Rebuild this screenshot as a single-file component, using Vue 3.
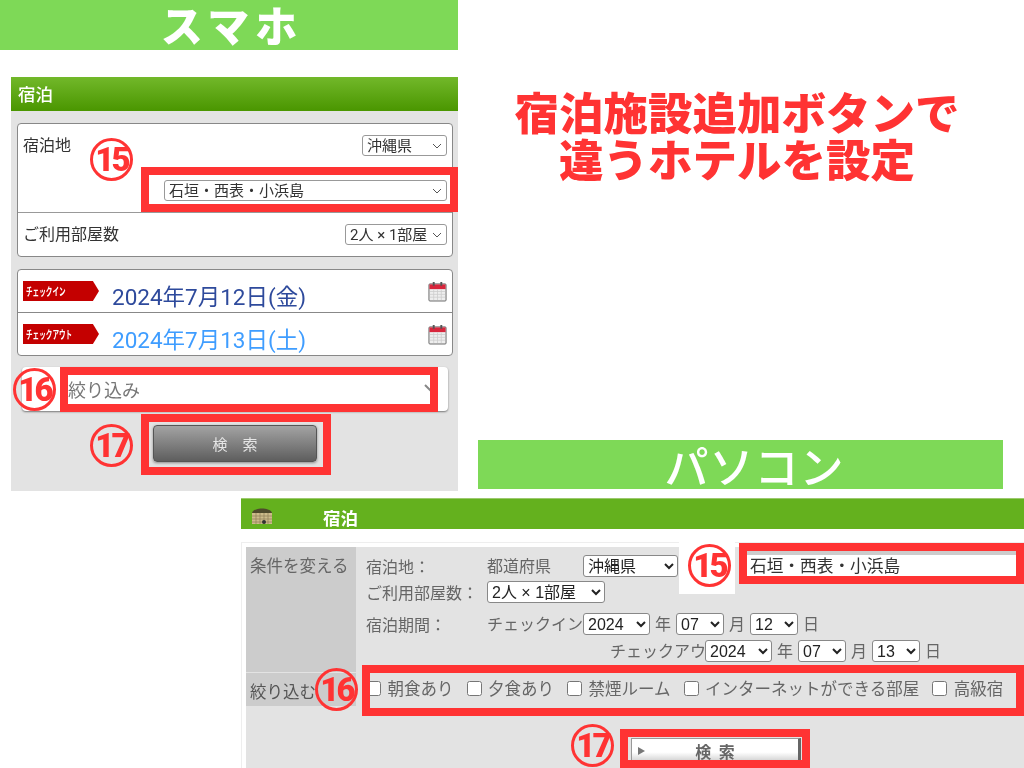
<script setup>
const chk = ['朝食あり', '夕食あり', '禁煙ルーム', 'インターネットができる部屋', '高級宿']
const badges = [
  { n: 15, x: 90, y: 138 },
  { n: 16, x: 13, y: 368 },
  { n: 17, x: 90, y: 424 },
  { n: 15, x: 688, y: 544 },
  { n: 16, x: 315, y: 668 },
  { n: 17, x: 571, y: 724 }
]
const boxes = [
  { x: 141, y: 167, w: 317, h: 45 },
  { x: 60, y: 367, w: 378, h: 45 },
  { x: 141, y: 414, w: 190, h: 61 },
  { x: 362, y: 665, w: 662, h: 51 },
  { x: 620, y: 729, w: 190, h: 39 }
]
</script>

<template>
  <div class="canvas">
    <div class="band band-sp"><span>スマホ</span></div>
    <div class="band band-pc"><span>パソコン</span></div>
    <div class="title"><div>宿泊施設追加ボタンで</div><div>違うホテルを設定</div></div>

    <section class="sp">
      <header class="sp-head">宿泊</header>
      <div class="sp-body">
        <div class="card">
          <div class="place">
            <span class="sp-label">宿泊地</span>
            <div class="place-sels">
              <select class="sp-sel w85"><option>沖縄県</option></select>
              <select class="sp-sel w283"><option>石垣・西表・小浜島</option></select>
            </div>
          </div>
          <div class="rooms">
            <span class="sp-label">ご利用部屋数</span>
            <select class="sp-sel w102"><option>2人 × 1部屋</option></select>
          </div>
        </div>
        <div class="card dates">
          <div class="date-row">
            <span class="tag"><b>チェックイン</b></span>
            <span class="date navy">2024年7月12日(金)</span>
            <svg class="cal" viewBox="0 0 20 22">
              <rect x="1" y="3" width="18" height="18" rx="1" fill="#eee" stroke="#666" />
              <rect x="1.500" y="3.500" width="17" height="5" fill="#d8263c" />
              <rect x="5" y="1" width="2" height="4" fill="#555" />
              <rect x="13" y="1" width="2" height="4" fill="#555" />
              <path d="M2 11h16M2 14h16M2 17h16M6 9v11M10 9v11M14 9v11" stroke="#ccc" stroke-width=".8" />
            </svg>
          </div>
          <div class="date-row second">
            <span class="tag"><b>チェックアウト</b></span>
            <span class="date sky">2024年7月13日(土)</span>
            <svg class="cal" viewBox="0 0 20 22">
              <rect x="1" y="3" width="18" height="18" rx="1" fill="#eee" stroke="#666" />
              <rect x="1.500" y="3.500" width="17" height="5" fill="#d8263c" />
              <rect x="5" y="1" width="2" height="4" fill="#555" />
              <rect x="13" y="1" width="2" height="4" fill="#555" />
              <path d="M2 11h16M2 14h16M2 17h16M6 9v11M10 9v11M14 9v11" stroke="#ccc" stroke-width=".8" />
            </svg>
          </div>
        </div>
        <div class="filter">
          <span>絞り込み</span>
          <svg class="filter-arrow" viewBox="0 0 14 8"><path d="M1 1l6 6 6-6" fill="none" stroke="#888" stroke-width="2" /></svg>
        </div>
        <button class="sp-btn" type="button">検　索</button>
      </div>
    </section>

    <section class="pc">
      <header class="pc-head">
        <svg class="hotel" viewBox="0 0 22 20">
          <path d="M1 8C2 2 20 2 21 8z" fill="#4f4a2c" />
          <rect x="1" y="8" width="20" height="11" fill="#cdbb8a" />
          <path d="M1 11h20M1 14h20M1 17h20M5 8v11M9 8v11M13 8v11M17 8v11" stroke="#8f7f58" stroke-width=".7" />
          <circle cx="13" cy="17" r="2" fill="#333" />
        </svg>
        <span>宿泊</span>
      </header>
      <div class="pc-body">
        <div class="side side-top">条件を変える</div>
        <div class="main">
          <div class="row r1">
            <span class="lab">宿泊地：</span>
            <span class="sub">都道府県</span>
            <select class="pc-sel w95"><option>沖縄県</option></select>
          </div>
          <div class="row r2">
            <span class="lab">ご利用部屋数：</span>
            <select class="pc-sel w118"><option>2人 × 1部屋</option></select>
          </div>
          <div class="row r3">
            <span class="lab">宿泊期間：</span>
            <span class="sub clip">チェックイン</span>
            <select class="pc-sel w67"><option>2024</option></select>
            <span class="unit">年</span>
            <select class="pc-sel w48"><option>07</option></select>
            <span class="unit">月</span>
            <select class="pc-sel w48"><option>12</option></select>
            <span class="unit">日</span>
          </div>
          <div class="row r4">
            <span class="sub clip">チェックアウ</span>
            <select class="pc-sel w67"><option>2024</option></select>
            <span class="unit">年</span>
            <select class="pc-sel w48"><option>07</option></select>
            <span class="unit">月</span>
            <select class="pc-sel w48"><option>13</option></select>
            <span class="unit">日</span>
          </div>
        </div>
        <div class="side side-bottom">絞り込む</div>
        <div class="checks">
          <label v-for="c in chk" :key="c" class="chk"><input type="checkbox" /><span>{{ c }}</span></label>
        </div>
        <div class="pc-foot">
          <button class="pc-btn" type="button"><i class="tri"></i><span>検 索</span></button>
        </div>
      </div>
    </section>

    <div class="patch"></div>
    <div class="area-box">石垣・西表・小浜島</div>
    <div v-for="b in boxes" :key="b.x + '-' + b.y" class="box"
      :style="{ left: b.x + 'px', top: b.y + 'px', width: b.w + 'px', height: b.h + 'px' }"></div>
    <div v-for="b in badges" :key="b.x + '_' + b.y" class="badge"
      :style="{ left: b.x + 'px', top: b.y + 'px' }">{{ b.n }}</div>
  </div>
</template>

<style>
html, body { margin: 0; background: #fff; }
</style>

<style scoped>
.canvas {
  position: relative;
  width: 1024px;
  height: 768px;
  overflow: hidden;
  background: #fff;
  font-family: "Noto Sans CJK JP", sans-serif;
  color: #444;
  filter: blur(0.45px);
}
.band {
  position: absolute;
  display: flex;
  align-items: center;
  justify-content: center;
  background: #7ed957;
  color: #fff;
}
.band-sp { left: 0; top: 0; width: 458px; height: 50px; font-size: 42px; font-weight: 900; letter-spacing: 6px; line-height: 44px; padding: 0 0 2px 6px; box-sizing: border-box; }
.band-pc { left: 478px; top: 440px; width: 525px; height: 49px; font-size: 44px; font-weight: 500; letter-spacing: 1px; line-height: 46px; padding-left: 28px; box-sizing: border-box; }
.title {
  position: absolute;
  left: 480px;
  top: 87px;
  width: 514px;
  text-align: center;
  color: #ff3333;
  font-size: 44.500px;
  font-weight: 900;
  line-height: 47px;
  white-space: nowrap;
}

/* phone panel */
.sp { position: absolute; left: 11px; top: 77px; width: 447px; height: 414px; background: #e3e3e3; display: flex; flex-direction: column; }
.sp-head {
  height: 34px;
  padding: 0 0 2px 7px;
  box-sizing: border-box;
  flex: none;
  display: flex;
  align-items: center;
  background: linear-gradient(#72b82a, #4a9600);
  color: #fff;
  font-size: 17.500px;
  font-weight: 500;
}
.sp-body { flex: 1; padding: 12px 5px 0 6px; display: flex; flex-direction: column; align-items: stretch; }
.card { background: #fff; border: 1px solid #888; border-radius: 4px; box-sizing: border-box; }
.place { height: 89px; box-sizing: border-box; border-bottom: 1px solid #999; display: flex; justify-content: space-between; padding: 11px 5px 0 5px; }
.sp-label { font-size: 16px; line-height: 20px; color: #333; margin-top: -1px; }
.place-sels { display: flex; flex-direction: column; align-items: flex-end; gap: 24px; }
.rooms { height: 43px; display: flex; justify-content: space-between; align-items: center; padding: 0 5px; }
.rooms .sp-label { margin-top: -3px; }
.sp-sel {
  appearance: none;
  height: 21px;
  box-sizing: border-box;
  border: 1px solid #999;
  border-radius: 3px;
  padding: 0 16px 0 4px;
  font: 15px Roboto, "Noto Sans CJK JP", sans-serif;
  color: #333;
  background: #fff url("data:image/svg+xml,%3Csvg xmlns='http://www.w3.org/2000/svg' width='10' height='6'%3E%3Cpath d='M1 1l4 4 4-4' fill='none' stroke='%23555'/%3E%3C/svg%3E") no-repeat right 4px center;
}
.w85 { width: 85px; }
.w283 { width: 283px; }
.w102 { width: 102px; }
.dates { margin-top: 12px; height: 87px; }
.date-row { height: 42px; box-sizing: border-box; display: flex; align-items: flex-start; padding: 11px 5px 0 5px; }
.date-row.second { height: 43px; border-top: 1px solid #888; }
.tag {
  width: 76px;
  height: 20px;
  flex: none;
  background: #c40000;
  color: #fff;
  font-size: 11px;
  line-height: 20px;
  padding-left: 3px;
  box-sizing: border-box;
  white-space: nowrap;
  clip-path: polygon(0 0, 92% 0, 100% 50%, 92% 100%, 0 100%);
}
.tag b { display: inline-block; font-weight: 700; transform: scaleX(.6); transform-origin: left center; }
.date {
  margin-left: 13px;
  font: 22.500px/32px Roboto, "Noto Sans CJK JP", sans-serif;
  white-space: nowrap;
}
.navy { color: #2e4a9c; }
.sky { color: #3f9dff; }
.cal { width: 19px; height: 21px; margin-left: auto; flex: none; }
.filter {
  margin: 11px 5px 0 5px;
  height: 44px;
  background: #fff;
  border-radius: 4px;
  box-shadow: 0 1px 2px #777;
  display: flex;
  align-items: center;
  padding-left: 46px;
  font-size: 18px;
  color: #777;
  position: relative;
}
.filter-arrow { position: absolute; left: 402px; top: 17px; width: 14px; height: 8px; }
.sp-btn {
  align-self: flex-start;
  margin: 14px 0 0 136px;
  width: 164px;
  height: 37px;
  border: 1px solid #555;
  border-radius: 4px;
  background: linear-gradient(#a3a3a3, #5e5e5e);
  box-shadow: 0 1px 3px #888;
  color: #e6e6e6;
  font: 15px "Noto Sans CJK JP", sans-serif;
}

/* desktop panel */
.pc { position: absolute; left: 241px; top: 498px; width: 783px; height: 270px; display: flex; flex-direction: column; }
.pc-head {
  height: 31px;
  flex: none;
  background: #64b11e;
  border-top: 1px solid #9cc96e;
  box-sizing: border-box;
  position: relative;
  display: flex;
  align-items: flex-end;
  color: #fff;
  font-size: 17.500px;
  font-weight: 700;
  line-height: 22px;
}
.pc-head span { margin-left: 82px; }
.hotel { position: absolute; left: 10px; top: 6px; width: 22px; height: 20px; }
.pc-body {
  margin-top: 13px;
  flex: 1;
  border: 1px solid #eee;
  border-width: 1px 0 0 1px;
  padding: 4px 0 0 4px;
  background: linear-gradient(#e3e3e3, #e3e3e3) content-box;
  display: grid;
  grid-template-columns: 110px 1fr;
  grid-template-rows: 125px 34px 1fr;
}
.side { background: #ccc; padding-left: 4px; font-size: 16.500px; color: #666; line-height: 24px; white-space: nowrap; }
.side-top { padding-top: 6px; box-sizing: border-box; }
.side-bottom { border-top: 1px solid #e3e3e3; line-height: 36px; color: #555; overflow: hidden; }
.main { padding: 8px 0 0 10px; display: flex; flex-direction: column; }
.row { display: flex; align-items: center; height: 22px; font-size: 16px; color: #666; white-space: nowrap; }
.r2 { margin-top: 4px; }
.r3 { margin-top: 10px; }
.r4 { margin-top: 5px; padding-left: 244px; }
.lab { width: 121px; flex: none; }
.sub { color: #666; margin-top: -2px; }
.r1 .sub { width: 96px; }
.clip { overflow: hidden; flex: none; }
.r3 .clip { width: 96px; }
.r4 .clip { width: 95px; }
.unit { margin: -2px 5px 0 5px; }
.pc-sel {
  height: 22px;
  box-sizing: border-box;
  border: 1px solid #888;
  border-radius: 3px;
  background: #fff;
  font: 16px "Liberation Sans", "Noto Sans CJK JP", sans-serif;
  color: #222;
  padding: 0;
}
.w95 { width: 95px; }
.w118 { width: 118px; }
.w67 { width: 67px; }
.w48 { width: 48px; }
.checks { padding: 0 0 2px 10px; display: flex; align-items: center; gap: 13px; font-size: 16.500px; color: #666; white-space: nowrap; }
.chk { display: flex; align-items: center; gap: 6.500px; }
.chk input { margin: 0; width: 15px; height: 15px; flex: none; }
.pc-foot { grid-column: 1 / 3; display: flex; padding: 32px 0 0 385px; }
.pc-btn {
  position: relative;
  width: 170px;
  height: 26px;
  border: 1px solid #999;
  border-right: 3px solid #666;
  background: linear-gradient(#fff 55%, #c8c8c8);
  padding: 0;
  color: #666;
  font: 700 16px "Noto Sans CJK JP", sans-serif;
  word-spacing: 4px;
}
.tri { position: absolute; left: 6px; top: 8px; border: 4px solid transparent; border-left: 7px solid #777; border-right: 0; }

/* annotations */
.patch { position: absolute; left: 679px; top: 542px; width: 56px; height: 52px; background: #fff; }
.area-box {
  position: absolute;
  left: 739px;
  top: 543px;
  width: 285px;
  height: 41px;
  box-sizing: border-box;
  border: 8px solid #ff3333;
  background: linear-gradient(#ccc 4px, #fff 4px);
  padding: 4px 0 0 3px;
  font-size: 16.700px;
  line-height: 21px;
  color: #333;
  white-space: nowrap;
}
.box { position: absolute; box-sizing: border-box; border: 8px solid #ff3333; }
.badge {
  position: absolute;
  width: 43px;
  height: 43px;
  box-sizing: border-box;
  border: 3.500px solid #ff3333;
  border-radius: 50%;
  display: flex;
  align-items: center;
  justify-content: center;
  color: #ff3333;
  font: 900 33px/1 Roboto, sans-serif;
  letter-spacing: -3px;
}
</style>
